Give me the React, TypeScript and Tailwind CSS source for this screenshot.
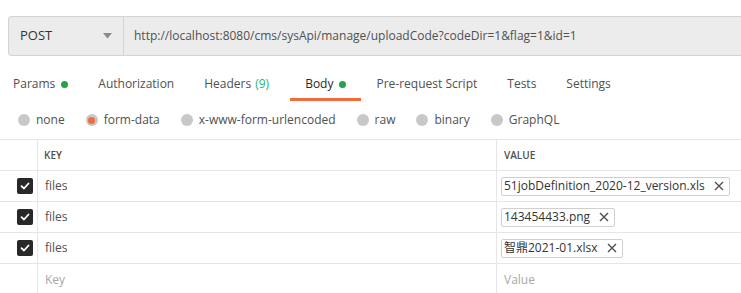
import React from "react";

const tabs = [
  { name: "Params", dot: true },
  { name: "Authorization" },
  { name: "Headers", count: "(9)" },
  { name: "Body", dot: true, active: true },
  { name: "Pre-request Script" },
  { name: "Tests" },
  { name: "Settings" },
];

const bodyTypes = ["none", "form-data", "x-www-form-urlencoded", "raw", "binary", "GraphQL"];

const rows = [
  { key: "files", file: "51jobDefinition_2020-12_version.xls" },
  { key: "files", file: "143454433.png" },
  { key: "files", file: "智鼎2021-01.xlsx" },
];

function CheckBox() {
  return (
    <div className="w-4 h-4 rounded-[2px] bg-[#282828] flex items-center justify-center">
      <svg width="10" height="10" viewBox="0 0 10 10" fill="none">
        <path d="M1.5 5.2 L4 7.5 L8.5 2.5" stroke="white" strokeWidth="1.8" strokeLinecap="round" strokeLinejoin="round" />
      </svg>
    </div>
  );
}

export default function App() {
  return (
    <div className="w-[741px] h-[293px] overflow-hidden bg-white text-[12px] text-[#505050]" style={{ fontFamily: '"Open Sans", "Noto Sans CJK SC", sans-serif' }}>
      {/* request bar */}
      <div className="pt-4 pl-2">
        <div className="flex h-[40px] w-[760px] border border-[#d4d4d4] bg-[#ececec] rounded-l-[3px]">
          <div className="w-[115px] flex items-center justify-between pl-[11px] pr-[11px] border-r border-[#d4d4d4] text-[13px] text-[#333]">
            <span>POST</span>
            <svg width="9" height="6" viewBox="0 0 9 6">
              <path d="M0 0 H9 L4.5 5.5 Z" fill="#8a8a8a" />
            </svg>
          </div>
          <div className="flex items-center pl-[10px] text-[#505050] whitespace-nowrap">
            http://localhost:8080/cms/sysApi/manage/uploadCode?codeDir=1&amp;flag=1&amp;id=1
          </div>
        </div>
      </div>

      {/* tabs */}
      <div className="flex -ml-[2px] mt-[19px] h-[26px]">
        {tabs.map((t) => (
          <div key={t.name} className="flex flex-col">
            <div className={"flex items-center gap-[6px] px-[15px] " + (t.active ? "text-[#282828]" : "text-[#505050]")}>
              <span>{t.name}</span>
              {t.count && <span className="text-[#26b47f] -ml-[2px] mr-[6px]">{t.count}</span>}
              {t.dot && <span className="w-[7px] h-[7px] rounded-full bg-[#26a34a]" />}
            </div>
            {t.active && <div className="mt-[5px] h-[3px] bg-[#f26b3a]" />}
          </div>
        ))}
      </div>

      {/* body type radios */}
      <div className="flex items-center pl-[18px] h-[20px] mt-[9px]">
        {bodyTypes.map((b) => (
          <div key={b} className="flex items-center mr-[21px]">
            {b === "form-data" ? (
              <span className="w-[12px] h-[12px] rounded-full bg-[#c8c8c8] flex items-center justify-center">
                <span className="w-[7px] h-[7px] rounded-full bg-[#f26b3a]" />
              </span>
            ) : (
              <span className="w-[12px] h-[12px] rounded-full bg-[#c8c8c8]" />
            )}
            <span className="ml-[6px] text-[#505050]">{b}</span>
          </div>
        ))}
      </div>

      {/* table */}
      <div className="mt-[9px] border-t border-[#e6e6e6]">
        <div className="flex h-[31px] border-b border-[#e6e6e6]">
          <div className="w-[38px] border-r border-[#e6e6e6]" />
          <div className="w-[459px] border-r border-[#e6e6e6] flex items-center pl-[6px] text-[10px] font-semibold text-[#505050]">KEY</div>
          <div className="flex-1 flex items-center pl-[7px] text-[10px] font-semibold text-[#505050]">VALUE</div>
        </div>
        {rows.map((r, i) => (
          <div key={i} className="flex h-[31px] border-b border-[#e6e6e6]">
            <div className="w-[38px] border-r border-[#e6e6e6] flex items-center justify-end pr-[4px]">
              <CheckBox />
            </div>
            <div className="w-[459px] border-r border-[#e6e6e6] flex items-center pl-[7px] text-[#505050]">{r.key}</div>
            <div className="flex-1 flex items-center pl-[4px]">
              <div className="flex items-center h-[19px] border border-[#d0d0d0] rounded-[2px] pl-[2px] pr-[5px] text-[#333] whitespace-nowrap">
                <span>{r.file}</span>
                <svg className="ml-[9px]" width="10" height="10" viewBox="0 0 10 10">
                  <path d="M1 1 L9 9 M9 1 L1 9" stroke="#505050" strokeWidth="1.4" />
                </svg>
              </div>
            </div>
          </div>
        ))}
        <div className="flex h-[31px]">
          <div className="w-[38px] border-r border-[#e6e6e6]" />
          <div className="w-[459px] border-r border-[#e6e6e6] flex items-center pl-[7px] text-[#a8a8a8]">Key</div>
          <div className="flex-1 flex items-center pl-[7px] text-[#a8a8a8]">Value</div>
        </div>
      </div>
    </div>
  );
}
